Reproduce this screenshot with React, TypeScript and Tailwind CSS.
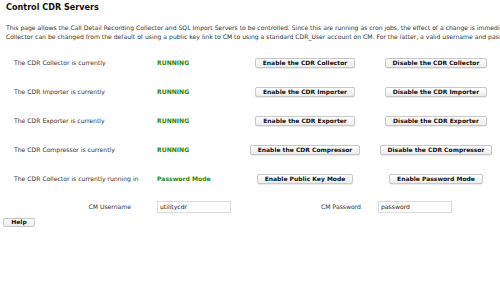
import React from 'react';

// --- Status rows of the CDR servers ---
interface ServerRow {
  label: string;
  status: string;
  enable: string;
  disable: string;
}

const rows: ServerRow[] = [
  { label: 'The CDR Collector is currently', status: 'RUNNING', enable: 'Enable the CDR Collector', disable: 'Disable the CDR Collector' },
  { label: 'The CDR Importer is currently', status: 'RUNNING', enable: 'Enable the CDR Importer', disable: 'Disable the CDR Importer' },
  { label: 'The CDR Exporter is currently', status: 'RUNNING', enable: 'Enable the CDR Exporter', disable: 'Disable the CDR Exporter' },
  { label: 'The CDR Compressor is currently', status: 'RUNNING', enable: 'Enable the CDR Compressor', disable: 'Disable the CDR Compressor' },
  { label: 'The CDR Collector is currently running in', status: 'Password Mode', enable: 'Enable Public Key Mode', disable: 'Enable Password Mode' },
];

function Btn({ children }: { children: React.ReactNode }) {
  return (
    <button className="h-[10px] px-[7px] rounded-[2px] border border-[#c8c8c8] bg-gradient-to-b from-white to-[#ececec] text-[6px] leading-none font-bold text-[#111] whitespace-nowrap shadow-[0_0.5px_0.5px_rgba(0,0,0,0.15)]">
      {children}
    </button>
  );
}

export default function App() {
  return (
    <div className="w-[500px] h-[283px] overflow-hidden bg-white text-[#222]" style={{ fontFamily: '"DejaVu Sans", Verdana, sans-serif' }}>
      <h1 className="pl-[6px] pt-[1px] text-[8.1px] leading-[12px] font-bold text-[#111]">Control CDR Servers</h1>

      <div className="pl-[6px] mt-[10px] text-[6.1px] leading-[9px] text-[#333] whitespace-nowrap">
        <p>This page allows the Call Detail Recording Collector and SQL Import Servers to be controlled. Since this are running as cron jobs, the effect of a change is immediate.</p>
        <p>Collector can be changed from the default of using a public key link to CM to using a standard CDR_User account on CM. For the latter, a valid username and password must be entered.</p>
      </div>

      <div className="mt-[7px] pl-[14px] grid grid-cols-[143px_84px_128px_134px] grid-rows-[29px_29px_29px_29px_29px_27px] items-center text-[6.1px] text-[#333]">
        {rows.map(r => (
          <React.Fragment key={r.enable}>
            <div className="whitespace-nowrap">{r.label}</div>
            <div className="font-bold text-[#2c8a0a] whitespace-nowrap">{r.status}</div>
            <div className="flex justify-center"><Btn>{r.enable}</Btn></div>
            <div className="flex justify-center"><Btn>{r.disable}</Btn></div>
          </React.Fragment>
        ))}
        <div className="text-right pr-[26px] whitespace-nowrap">CM Username</div>
        <div>
          <input defaultValue="utilitycdr" className="w-[74px] h-[12px] border border-[#dcdcdc] px-[2px] text-[6.1px] text-[#222] outline-none" />
        </div>
        <div className="text-right pr-[8px] whitespace-nowrap">CM Password</div>
        <div className="pl-[9px]">
          <input defaultValue="password" className="w-[74px] h-[12px] border border-[#dcdcdc] px-[2px] text-[6.1px] text-[#222] outline-none" />
        </div>
      </div>

      <div className="pl-[3px] -mt-[13px]">
        <button className="w-[32px] h-[9px] rounded-[2px] border border-[#c8c8c8] bg-gradient-to-b from-white to-[#ececec] text-[6px] leading-none font-bold text-[#111]">Help</button>
      </div>
    </div>
  );
}
